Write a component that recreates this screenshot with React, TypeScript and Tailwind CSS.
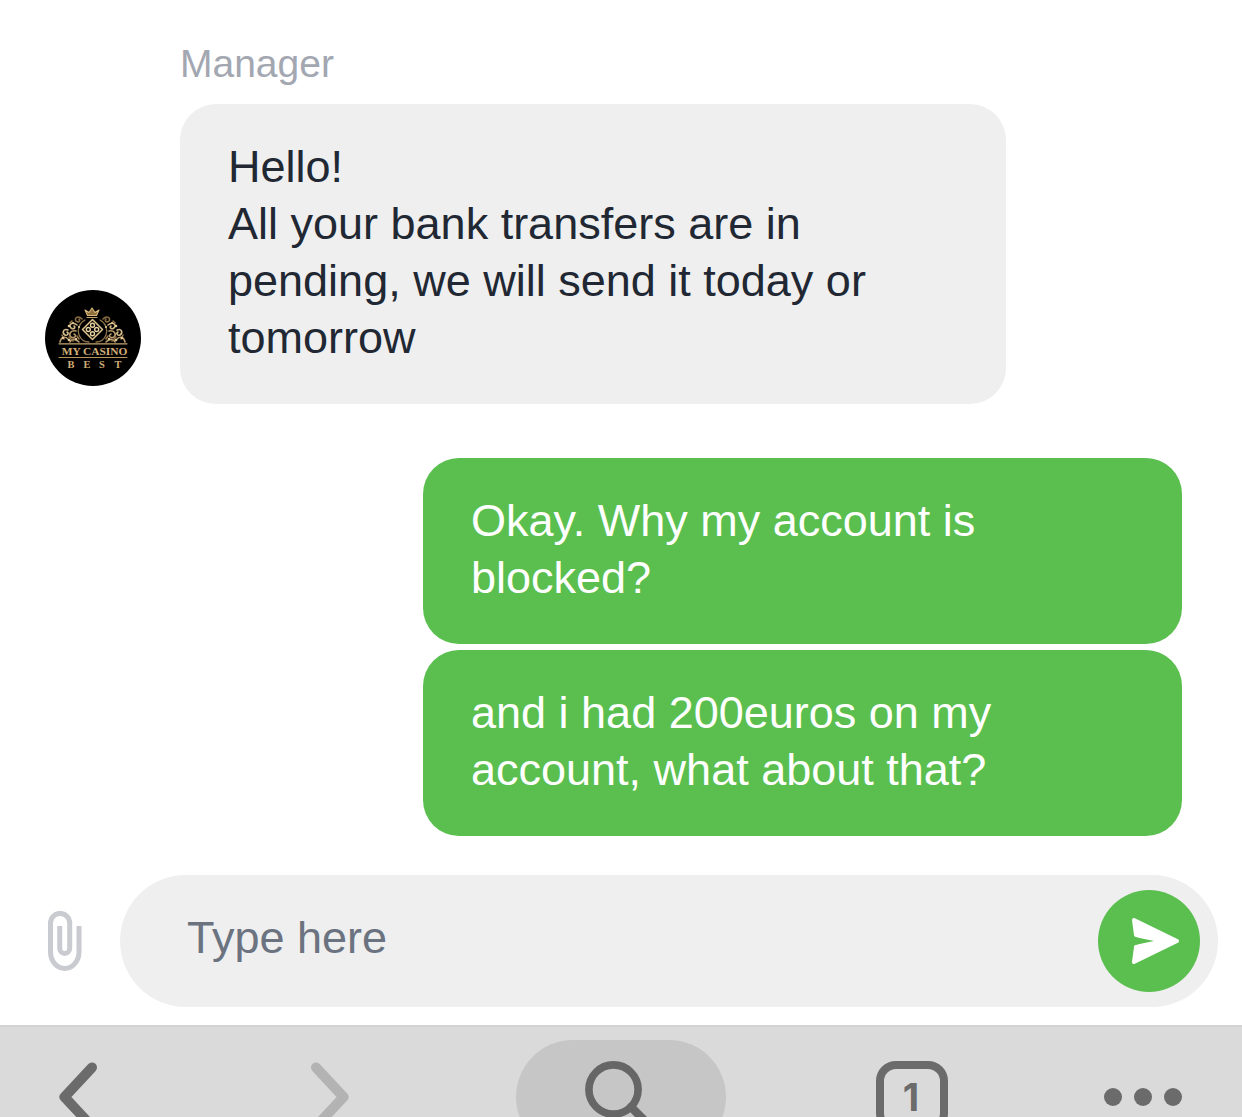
import type { ReactNode } from 'react';

function Scrollwork() {
  return (
    <>
      <path d="M37 29 C33 25 29 28 31 31 C33 33 36 31 34 29" stroke="#8a6d42" />
      <path d="M32 35 C27 31 23 35 26 38 C29 40 31 37 29 36" stroke="#cfb481" />
      <path d="M31 41 C26 40 23 44 26 47 C30 49 32 45 29 44" stroke="#b79a6c" />
      <path d="M23 40 C18 38 17 43 20 45 C23 46 24 43 22 42" stroke="#d9bf8c" />
      <path d="M15 52 C16 47 20 46 23 49 M25 52 C27 48 31 49 34 52" stroke="#b79a6c" />
      <path d="M19 49 L17 45 M25 33 L27 31 M28 51 L24 47 M34 49 L32 46" stroke="#947648" />
      <g fill="#e3cb9a" stroke="none">
        <circle cx="24" cy="36" r="1.3" />
        <circle cx="18" cy="48" r="1.3" />
        <circle cx="28" cy="33" r="1" />
        <circle cx="34" cy="37" r="1.1" />
        <circle cx="24" cy="50" r="1.3" />
        <circle cx="31" cy="49" r="1.2" />
      </g>
    </>
  );
}

function Avatar() {
  return (
    <svg
      viewBox="0 0 96 96"
      role="img"
      aria-label="My Casino Best"
      className="mb-[18px] size-24 shrink-0 rounded-full bg-black"
    >
      <g fill="none" strokeLinecap="round" strokeLinejoin="round">
        {/* crown */}
        <path
          d="M42.5 25.5 L40 20 L44 22.5 L47 18 L50 22.5 L54 20 L51.5 25.5 Z"
          fill="#8f6f3d"
          stroke="#d8b87c"
          strokeWidth="1.1"
        />
        <path d="M42 27.5 H52" stroke="#c9a468" strokeWidth="1.2" />
        {/* central medallion */}
        <path d="M47.5 29.5 L57.5 39.5 L47.5 49.5 L37.5 39.5 Z" stroke="#e0c48d" strokeWidth="1.5" />
        <g stroke="#ead3a2" strokeWidth="1.4">
          <circle cx="47.5" cy="35.3" r="2" />
          <circle cx="47.5" cy="43.7" r="2" />
          <circle cx="43.3" cy="39.5" r="2" />
          <circle cx="51.7" cy="39.5" r="2" />
        </g>
        <path
          d="M40 30 C34 33 32 40 34 45 C36 50 40 52 44 52 M55 30 C61 33 63 40 61 45 C59 50 55 52 51 52"
          stroke="#8d734b"
          strokeWidth="1.3"
        />
        <g strokeWidth="1.6">
          <Scrollwork />
        </g>
        <g transform="matrix(-1 0 0 1 95 0)" strokeWidth="1.6">
          <Scrollwork />
        </g>
        <path d="M14 53.8 H82" stroke="#c4a56f" strokeWidth="1.2" />
        <path d="M14 67.5 H82" stroke="#b7935c" strokeWidth="1" />
      </g>
      <g fill="#d3af78" fontFamily="'Liberation Serif', serif" fontWeight="700" textAnchor="middle">
        <text x="49.5" y="65" fontSize="11.4">MY CASINO</text>
        <g fontSize="10.4">
          <text x="26" y="78.2">B</text>
          <text x="42" y="78.2">E</text>
          <text x="57" y="78.2">S</text>
          <text x="73" y="78.2">T</text>
        </g>
      </g>
    </svg>
  );
}

function SentMessage({ children }: { children: ReactNode }) {
  return (
    <p className="rounded-[36px] bg-[#5bbf4f] px-12 pt-[34px] pb-[38px] text-[45px] leading-[57px] text-white">
      {children}
    </p>
  );
}

function Composer() {
  return (
    <form
      className="mt-[39px] flex items-center pr-6 pl-12"
      onSubmit={(event) => event.preventDefault()}
    >
      <button type="button" aria-label="Attach a file" className="mr-[38px] shrink-0">
        <svg viewBox="0 0 34 60" fill="none" stroke="#c9cbd0" strokeWidth="5" className="h-[60px] w-[34px]">
          <path d="M31 15 V41 a14.25 16.5 0 0 1 -28.5 0 V12 a9.6 9.6 0 0 1 19.2 0 V37 a5 5.6 0 0 1 -10 0 V15" />
        </svg>
      </button>
      <div className="flex h-[132px] min-w-0 flex-1 items-center rounded-full bg-[#efefef] pr-[18px] pl-[67px]">
        <input
          type="text"
          aria-label="Message"
          placeholder="Type here"
          className="mb-2 min-w-0 flex-1 bg-transparent text-[45px] leading-[57px] text-[#212833] outline-none placeholder:text-[#6b7280]"
        />
        <button
          type="submit"
          aria-label="Send"
          className="size-[102px] shrink-0 rounded-full bg-[#5bbf4f]"
        >
          <svg viewBox="0 0 102 102" className="size-full">
            <path
              d="M36 30 L79 51 L36 72 L38 57 L58 51 L38 45 Z"
              fill="#fff"
              stroke="#fff"
              strokeWidth="4"
              strokeLinejoin="round"
            />
            <path d="M34 46.5 L56 51 L34 55.5 Z" fill="#5bbf4f" />
          </svg>
        </button>
      </div>
    </form>
  );
}

function BrowserBar() {
  return (
    <nav
      aria-label="Browser"
      className="mt-[18px] flex h-[92px] items-start justify-between overflow-hidden border-t-2 border-[#d3d3d3] bg-[#dadada] pt-[13px] pr-[54px] pl-[13px] text-[#6b6b6b]"
    >
      <button type="button" aria-label="Back" className="flex h-[114px] w-[130px] items-center justify-center">
        <svg viewBox="0 0 38 70" fill="none" stroke="currentColor" strokeWidth="10" strokeLinecap="round" strokeLinejoin="round" className="h-[70px] w-[38px]">
          <path d="M33 5.5 L5.5 35 L33 64.5" />
        </svg>
      </button>
      <button type="button" aria-label="Forward" disabled className="flex h-[114px] w-[73px] items-center justify-center text-[#b3b3b3]">
        <svg viewBox="0 0 38 70" fill="none" stroke="currentColor" strokeWidth="10" strokeLinecap="round" strokeLinejoin="round" className="h-[70px] w-[38px]">
          <path d="M5 5.5 L32.5 35 L5 64.5" />
        </svg>
      </button>
      <button type="button" aria-label="Search" className="flex h-[114px] w-[210px] items-center justify-center rounded-full bg-[#c6c6c6]">
        <svg viewBox="0 0 72 72" fill="none" stroke="#666" className="size-[72px]">
          <circle cx="28.5" cy="28.5" r="24.6" strokeWidth="7.6" />
          <path d="M46 46 L67 67" strokeWidth="8.5" strokeLinecap="round" />
        </svg>
      </button>
      <button type="button" aria-label="Open tabs: 1" className="flex h-[114px] w-[72px] items-center justify-center">
        <span className="flex size-[72px] items-center justify-center rounded-[20px] border-8 border-current pr-0.5 font-['Inter',sans-serif] text-[38px] leading-none font-bold">
          1
        </span>
      </button>
      <button type="button" aria-label="More" className="flex h-[114px] w-[90px] items-center justify-center gap-3">
        <span className="size-[18px] rounded-full bg-current" />
        <span className="size-[18px] rounded-full bg-current" />
        <span className="size-[18px] rounded-full bg-current" />
      </button>
    </nav>
  );
}

export default function App() {
  return (
    <div className="flex min-h-screen flex-col bg-white font-['Liberation_Sans',Arial,sans-serif]">
      <main className="flex flex-1 flex-col">
        <section aria-label="Conversation" className="flex-1 pt-10">
          <h2 className="pl-[180px] text-[39px] leading-[48px] text-[#a2a7b1]">Manager</h2>
          <div className="mt-4 flex items-end gap-[39px] pr-[236px] pl-[45px]">
            <Avatar />
            <p className="min-w-0 flex-1 rounded-[36px] bg-[#efefef] pt-[34px] pr-[60px] pb-[38px] pl-12 text-[45px] leading-[57px] text-[#212833]">
              Hello!
              <br />
              All your bank transfers are in pending, we will send it today or tomorrow
            </p>
          </div>
          <div className="mt-[54px] flex flex-col gap-1.5 pr-[60px] pl-[423px]">
            <SentMessage>Okay. Why my account is blocked?</SentMessage>
            <SentMessage>and i had 200euros on my account, what about that?</SentMessage>
          </div>
        </section>
        <Composer />
      </main>
      <BrowserBar />
    </div>
  );
}
